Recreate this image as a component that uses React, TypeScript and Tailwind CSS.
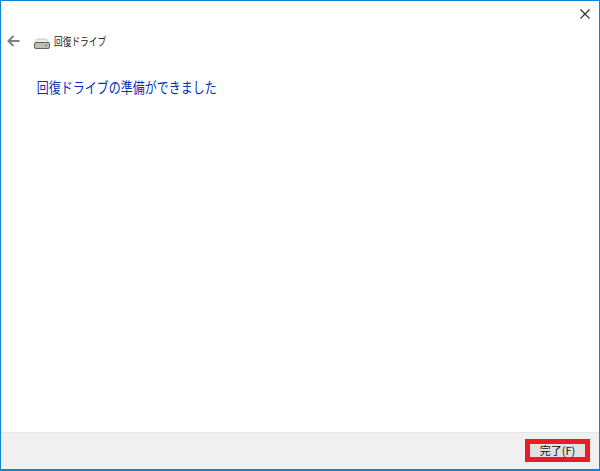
export default function App() {
  return (
    <div className="w-[600px] h-[471px] border border-[#0a84dc] border-b-2 bg-white flex flex-col overflow-hidden font-['Noto_Sans_CJK_JP','Liberation_Sans',sans-serif]">
      <div className="h-[431px] flex flex-col">
        <div className="h-[24px] flex justify-end items-start pt-[8px] pr-[9px]">
          <svg width="10" height="10" viewBox="0 0 10 10" className="block">
            <path d="M0.5 0.5 L9.5 9.5 M9.5 0.5 L0.5 9.5" stroke="#333" strokeWidth="1.2" fill="none" />
          </svg>
        </div>
        <div className="flex items-center h-[32px] pl-[6px]">
          <svg width="13" height="12" viewBox="0 0 13 12" className="block">
            <path d="M12.5 6 H2 M6.5 1 L1.5 6 L6.5 11" stroke="#808080" strokeWidth="2" fill="none" />
          </svg>
          <svg width="16" height="11" viewBox="0 0 16 11" className="block ml-[14px] mt-[4px]">
            <path d="M3 1 H12.5 L15 5 H1 Z" fill="#ececec" stroke="#b4b4b4" strokeWidth="0.7" />
            <rect x="0.5" y="4.5" width="15" height="6" rx="1.5" fill="#bdbdbd" stroke="#555" strokeWidth="0.9" />
            <rect x="11" y="6.5" width="2" height="2" fill="#5fbf3f" />
          </svg>
          <span className="ml-[4px] text-[11px] leading-[14px] text-[#222] inline-block origin-left scale-x-[0.79] whitespace-nowrap">回復ドライブ</span>
        </div>
        <div className="pl-[36px] pt-[20px] text-[15px] leading-[20px] text-[#0033bc] origin-left scale-x-[0.8] translate-x-[7px] whitespace-nowrap">回復ドライブの準備ができました</div>
      </div>
      <div className="flex-1 bg-[#f0f0f0] border-t border-[#e6e6e6] flex justify-end items-start pt-[6px] pr-[9px]">
        <div className="w-[65px] h-[23px] border-[5px] border-[#ed1c24] bg-[#e1e1e1] flex items-center justify-center text-[11px] leading-none text-[#111]">完了(F)</div>
      </div>
    </div>
  );
}
